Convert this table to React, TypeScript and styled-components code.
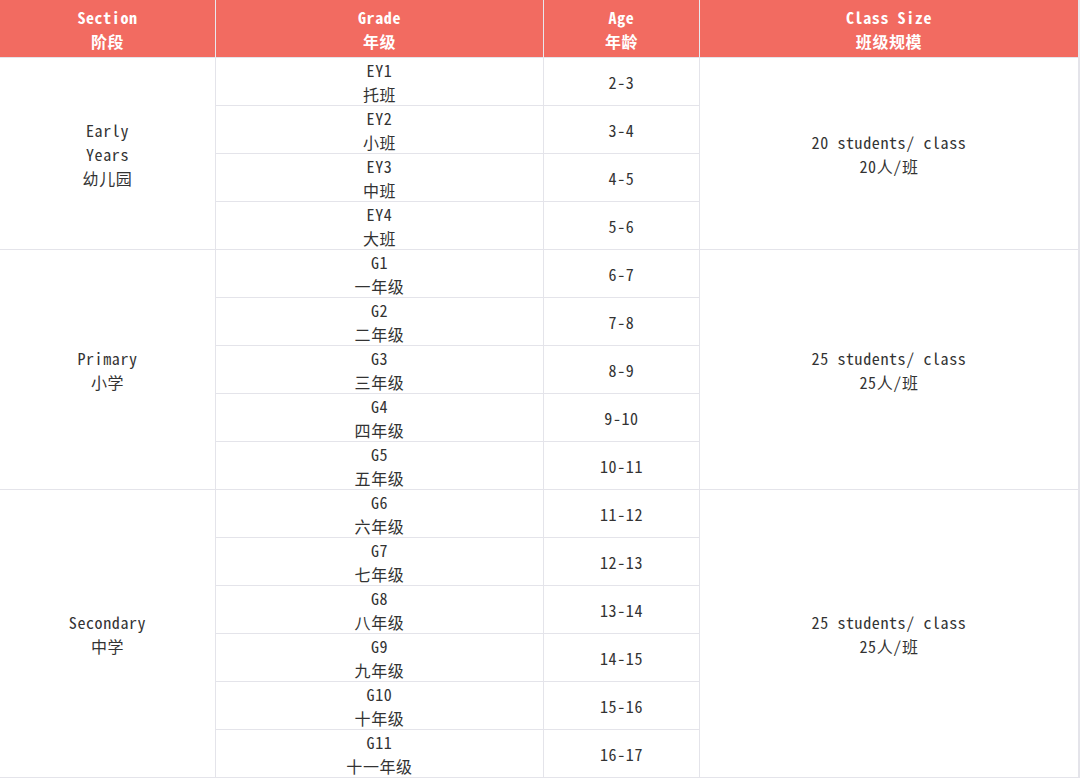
import React from 'react';
import styled, { createGlobalStyle } from 'styled-components';

type Grade = { code: string; name: string; age: string };
type Section = { en: string[]; zh: string; size: string; sizeZh: string; grades: Grade[] };

const sections: Section[] = [
  {
    en: ['Early', 'Years'],
    zh: '幼儿园',
    size: '20 students/ class',
    sizeZh: '20人/班',
    grades: [
      { code: 'EY1', name: '托班', age: '2-3' },
      { code: 'EY2', name: '小班', age: '3-4' },
      { code: 'EY3', name: '中班', age: '4-5' },
      { code: 'EY4', name: '大班', age: '5-6' },
    ],
  },
  {
    en: ['Primary'],
    zh: '小学',
    size: '25 students/ class',
    sizeZh: '25人/班',
    grades: [
      { code: 'G1', name: '一年级', age: '6-7' },
      { code: 'G2', name: '二年级', age: '7-8' },
      { code: 'G3', name: '三年级', age: '8-9' },
      { code: 'G4', name: '四年级', age: '9-10' },
      { code: 'G5', name: '五年级', age: '10-11' },
    ],
  },
  {
    en: ['Secondary'],
    zh: '中学',
    size: '25 students/ class',
    sizeZh: '25人/班',
    grades: [
      { code: 'G6', name: '六年级', age: '11-12' },
      { code: 'G7', name: '七年级', age: '12-13' },
      { code: 'G8', name: '八年级', age: '13-14' },
      { code: 'G9', name: '九年级', age: '14-15' },
      { code: 'G10', name: '十年级', age: '15-16' },
      { code: 'G11', name: '十一年级', age: '16-17' },
    ],
  },
];

const headers = [
  ['Section', '阶段'],
  ['Grade', '年级'],
  ['Age', '年龄'],
  ['Class Size', '班级规模'],
];

const App: React.FC = () => {
  return (
    <>
      <GlobalStyle />
      <Grid>
        {headers.map(([en, zh]) => (
          <HeadCell key={en}>
            <span>{en}</span>
            <span>{zh}</span>
          </HeadCell>
        ))}
        {sections.map(s => (
          <React.Fragment key={s.zh}>
            <Cell span={s.grades.length} col={1}>
              {s.en.map(w => (
                <span key={w}>{w}</span>
              ))}
              <span>{s.zh}</span>
            </Cell>
            {s.grades.map(g => (
              <React.Fragment key={g.code}>
                <Cell col={2}>
                  <span>{g.code}</span>
                  <span>{g.name}</span>
                </Cell>
                <Cell col={3}>{g.age}</Cell>
              </React.Fragment>
            ))}
            <Cell span={s.grades.length} col={4} last>
              <span>{s.size}</span>
              <span>{s.sizeZh}</span>
            </Cell>
          </React.Fragment>
        ))}
      </Grid>
    </>
  );
};

const GlobalStyle = createGlobalStyle`
  html, body {
    margin: 0;
    padding: 0;
    background: #fff;
  }
  body {
    font-family: "Noto Sans Mono CJK SC", "Liberation Mono", "Noto Sans CJK SC", monospace;
    color: #333;
  }
`;

const Grid = styled.div`
  display: grid;
  grid-template-columns: 216px 328px 156px 380px;
  grid-template-rows: 58px;
  grid-auto-rows: 48px;
  grid-auto-flow: row dense;
  width: 1080px;
  font-size: 16px;
  letter-spacing: 0.6px;
  line-height: 24px;
`;

const HeadCell = styled.div`
  display: flex;
  flex-direction: column;
  align-items: center;
  justify-content: center;
  box-sizing: border-box;
  background: #f26b61;
  color: #fff;
  font-weight: bold;
  border-right: 1px solid #e8e8ee;
  border-bottom: 1px solid #e4e4ea;
  &:nth-child(4) {
    border-right: 2px solid #e8e8ee;
  }
`;

const Cell = styled.div<{ span?: number; col: number; last?: boolean }>`
  grid-column: ${p => p.col};
  grid-row: span ${p => p.span ?? 1};
  display: flex;
  flex-direction: column;
  align-items: center;
  justify-content: center;
  box-sizing: border-box;
  text-align: center;
  border-bottom: 1px solid #e4e4ea;
  border-right: ${p => (p.last ? '2px' : '1px')} solid #e4e4ea;
`;

export default App;
